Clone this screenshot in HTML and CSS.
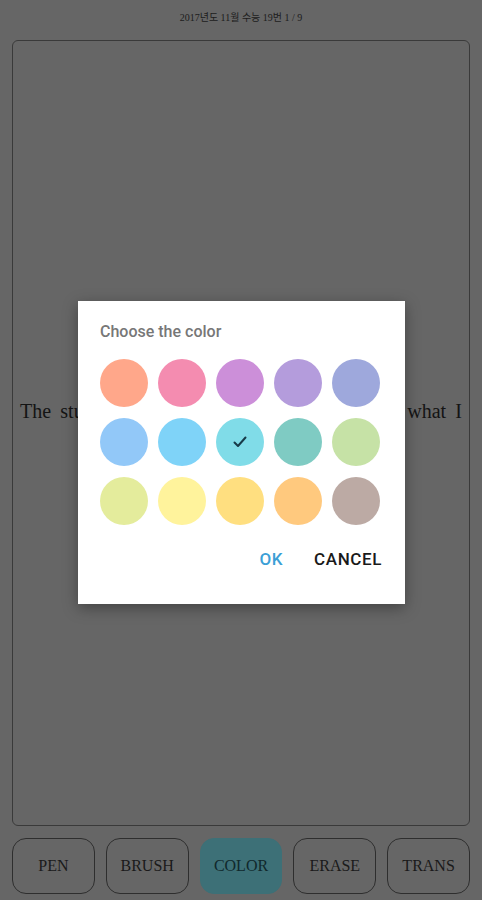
FILE: index.html
```html
<!DOCTYPE html>
<html lang="ko">
<head>
    <meta charset="UTF-8">
    <meta name="viewport" content="width=device-width, initial-scale=1.0">
    <title>Note</title>
    <link rel="stylesheet" href="styles.css">
</head>
<body>
    <div class="page">
        <div class="header">2017년도 11월 수능 19번 1 / 9</div>
        <div class="sheet">
            <p class="line">The students in the classroom did not know what I</p>
        </div>
        <div class="tools">
            <button class="tool">PEN</button>
            <button class="tool">BRUSH</button>
            <button class="tool active">COLOR</button>
            <button class="tool">ERASE</button>
            <button class="tool">TRANS</button>
        </div>
    </div>

    <div class="dialog">
        <div class="dialog-title">Choose the color</div>
        <div class="swatches">
            <span class="swatch" style="background:#ffa78a"></span>
            <span class="swatch" style="background:#f48cb0"></span>
            <span class="swatch" style="background:#cc8fd9"></span>
            <span class="swatch" style="background:#b49cdc"></span>
            <span class="swatch" style="background:#9ea8dc"></span>
            <span class="swatch" style="background:#92c8f8"></span>
            <span class="swatch" style="background:#7fd3f8"></span>
            <span class="swatch" style="background:#80dce8">
                <svg class="check" width="14" height="12" viewBox="0 0 14 12"><path d="M1.5 6.5 L5 10 L12.5 1.5" fill="none" stroke="#173a48" stroke-width="2" stroke-linecap="round" stroke-linejoin="round"/></svg>
            </span>
            <span class="swatch" style="background:#7fcbc3"></span>
            <span class="swatch" style="background:#c6e2a6"></span>
            <span class="swatch" style="background:#e4ec9c"></span>
            <span class="swatch" style="background:#fff39c"></span>
            <span class="swatch" style="background:#ffdf80"></span>
            <span class="swatch" style="background:#ffc97e"></span>
            <span class="swatch" style="background:#bcaaa4"></span>
        </div>
        <div class="dialog-actions">
            <button class="action ok">OK</button>
            <button class="action">CANCEL</button>
        </div>
    </div>
</body>
</html>
```

FILE: styles.css
```css
html, body {
    margin: 0;
    height: 100%;
}
body {
    background: #666666;
    font-family: "Liberation Serif", "Noto Sans CJK KR", serif;
    color: #141414;
}
.page {
    height: 900px;
    box-sizing: border-box;
    padding: 0 12px 6px;
    display: flex;
    flex-direction: column;
}
.header {
    height: 40px;
    line-height: 36px;
    text-align: center;
    font-size: 10px;
    color: #1c1c1c;
}
.sheet {
    flex: 1;
    border: 1.5px solid #3a3a3a;
    border-radius: 6px;
    padding: 0 7px 44px;
    display: flex;
    flex-direction: column;
    justify-content: center;
}
.line {
    margin: 0;
    font-size: 20px;
    text-align: justify;
    text-align-last: justify;
}
.tools {
    display: flex;
    gap: 11px;
    margin-top: 12px;
}
.tool {
    flex: 1;
    height: 56px;
    border: 1.5px solid #2e2e2e;
    border-radius: 14px;
    background: transparent;
    font-family: "Liberation Serif", serif;
    font-size: 16px;
    color: #1a1a1a;
    padding: 0;
}
.tool.active {
    background: #3d7077;
    border-color: #3d7077;
    color: #10282c;
}
.dialog {
    position: absolute;
    left: 78px;
    top: 301px;
    width: 327px;
    height: 303px;
    box-sizing: border-box;
    background: #fff;
    box-shadow: 0 4px 14px rgba(0, 0, 0, 0.35);
    padding: 21px 22px 0;
    font-family: Roboto, "Noto Sans", sans-serif;
}
.dialog-title {
    font-size: 16px;
    font-weight: 500;
    color: #777;
    line-height: 20px;
}
.swatches {
    display: grid;
    grid-template-columns: repeat(5, 48px);
    column-gap: 10px;
    row-gap: 11px;
    margin-top: 17px;
}
.swatch {
    width: 48px;
    height: 48px;
    border-radius: 50%;
    display: flex;
    align-items: center;
    justify-content: center;
}
.dialog-actions {
    display: flex;
    justify-content: flex-end;
    gap: 31px;
    margin-top: 24px;
    padding-right: 1px;
}
.action {
    border: none;
    background: none;
    padding: 0;
    font-family: Roboto, sans-serif;
    font-size: 17px;
    font-weight: 500;
    letter-spacing: 0.6px;
    color: #1a1a1a;
}
.action.ok {
    color: #3b9fd6;
}
```
